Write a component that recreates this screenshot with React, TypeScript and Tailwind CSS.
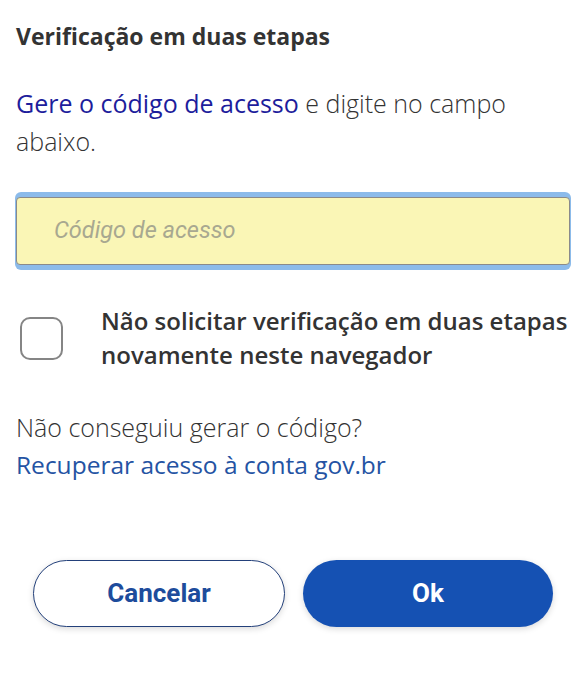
import React from "react";

export default function App() {
  return (
    <div className="w-[586px] h-[677px] bg-white overflow-hidden" style={{ fontFamily: "'Open Sans', sans-serif" }}>
      <div className="px-4 pt-[20px]">
        <h1 className="text-[23px] font-bold text-[#333333] leading-[32px]">Verificação em duas etapas</h1>
        <p className="mt-[32px] text-[25px] leading-[38px] text-[#333333] font-light">
          <a className="text-[#1d1d9c] font-normal">Gere o código de acesso</a> e digite no campo abaixo.
        </p>
        <div className="mt-[32px] rounded-[6px] bg-[#8cbbea] py-[5px] -mx-[1px] px-[1px]">
          <div className="h-[68px] rounded-[4px] border border-[#8a8a8a] bg-[#faf6b6] flex items-center pl-[37px]">
            <span className="text-[23.5px] italic text-[#a8a890]" style={{ fontFamily: "Roboto, sans-serif" }}>Código de acesso</span>
          </div>
        </div>
        <div className="mt-[34px] flex items-center">
          <div className="w-[43px] h-[43px] ml-[4px] rounded-[10px] border-[2.5px] border-[#858585] shrink-0" />
          <p className="ml-[38px] text-[24px] leading-[34px] font-semibold text-[#333333]">
            Não solicitar verificação em duas etapas novamente neste navegador
          </p>
        </div>
        <p className="mt-[36px] text-[25px] leading-[38px] text-[#333333] font-light">Não conseguiu gerar o código?</p>
        <p className="text-[24.5px] leading-[38px] text-[#2453a3]">Recuperar acesso à conta gov.br</p>
        <div className="mt-[76px] flex gap-[18px] px-[17px]" style={{ fontFamily: "Roboto, sans-serif" }}>
          <button className="w-[252px] h-[67px] rounded-full border-[1.5px] border-[#23407a] bg-white text-[#1d4c9c] text-[26px] font-bold shadow-[0_2px_6px_rgba(0,0,0,0.15)]">Cancelar</button>
          <button className="w-[250px] h-[67px] rounded-full bg-[#1551b3] text-white text-[26px] font-bold shadow-[0_2px_6px_rgba(0,0,0,0.15)]">Ok</button>
        </div>
      </div>
    </div>
  );
}
